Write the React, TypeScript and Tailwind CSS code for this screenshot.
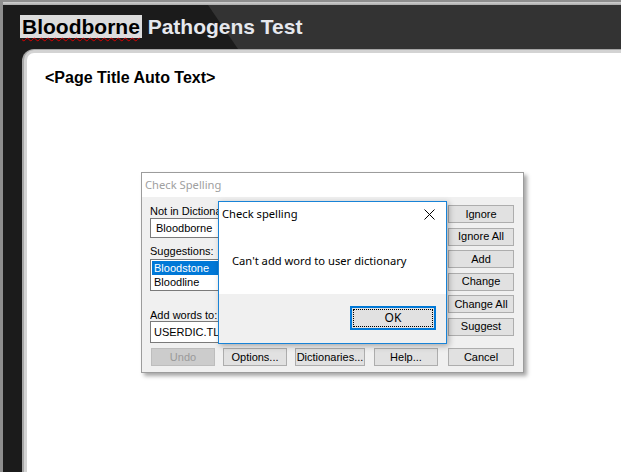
import React from "react";

const sideButtons = ["Ignore", "Ignore All", "Add", "Change", "Change All", "Suggest"];

function WinButton({ label, className = "", disabled = false }: { label: string; className?: string; disabled?: boolean }) {
  return (
    <div
      className={`flex h-[18px] items-center justify-center border text-[11px] leading-none ${
        disabled ? "border-[#bdbdbd] bg-[#cccccc] text-[#9a9a9a]" : "border-[#adadad] bg-[#e1e1e1] text-black"
      } ${className}`}
    >
      {label}
    </div>
  );
}

export default function App() {
  return (
    <div className="relative h-[472px] w-[621px] overflow-hidden font-['Liberation_Sans',Arial,sans-serif]">
      {/* page frame */}
      <div className="h-full border-l-[3px] border-t-[2px] border-[#8e8e8e] bg-[#1b1b1b]">
        <div className="h-[3px] bg-[linear-gradient(#d2d2d2,#a9a9a9)]" />

        {/* header band */}
        <div className="relative h-[44px] bg-[#333333]">
          <div className="absolute inset-0 bg-[#1b1b1b] [clip-path:polygon(0_0,205px_0,235px_100%,0_100%)]" />
          <h1 className="relative pl-[17px] pt-[10px] text-[21px] font-bold leading-[23px]">
            <span className="inline-block bg-[#dcdcdc] px-[2px] text-black underline decoration-[#e00000] decoration-wavy decoration-1 underline-offset-[3px]">
              Bloodborne
            </span>
            <span className="text-[#e6e8ee]"> Pathogens Test</span>
          </h1>
        </div>

        {/* content panel */}
        <div className="ml-[19px] h-[423px] rounded-tl-[12px] bg-[#a6a6a6] pl-[2px] pt-[1px]">
          <div className="h-full rounded-tl-[10px] border-l-[3px] border-t-[3px] border-[#d3d3d3] bg-white pl-[18px] pt-[16px]">
            <p className="text-[16px] font-bold leading-[18px] text-black">&lt;Page Title Auto Text&gt;</p>
          </div>
        </div>
      </div>

      {/* Check Spelling window (inactive, partly covered) */}
      <div className="absolute left-[141px] top-[172px] flex h-[201px] w-[383px] flex-col border border-[#9c9c9c] bg-[#f0f0f0] shadow-[3px_3px_4px_rgba(0,0,0,0.35)]">
        <div className="flex h-[24px] items-center bg-white pl-[3px] font-['Noto_Sans',sans-serif] text-[11.2px] text-[#a0a0a0]">
          Check Spelling
        </div>
        <div className="flex pl-[8px] pr-[9px] pt-[8px]">
          <div className="w-[290px] text-[11px] text-black">
            <div className="h-[13px] w-[68px] overflow-hidden whitespace-nowrap leading-[13px]">Not in Dictionary:</div>
            <div className="flex h-[20px] items-center border border-[#7a7a7a] bg-white pl-[5px]">Bloodborne</div>
            <div className="mt-[7px] h-[13px] w-[68px] overflow-hidden whitespace-nowrap leading-[13px]">Suggestions:</div>
            <div className="mt-[1px] h-[32px] border border-[#7a7a7a] bg-white p-[1px]">
              <div className="h-[14px] bg-[#0078d7] pl-[2px] leading-[14px] text-white">Bloodstone</div>
              <div className="h-[14px] pl-[2px] leading-[14px]">Bloodline</div>
            </div>
            <div className="mt-[18px] h-[12px] w-[68px] overflow-hidden whitespace-nowrap leading-[12px]">Add words to:</div>
            <div className="flex h-[22px] items-center border border-[#7a7a7a] bg-white pl-[3px]">USERDIC.TLX</div>
          </div>
          <div className="ml-[8px] flex w-[66px] flex-col gap-[4.6px]">
            {sideButtons.map((b) => (
              <WinButton key={b} label={b} />
            ))}
          </div>
        </div>
        <div className="mt-[5px] flex pl-[9px]">
          <WinButton label="Undo" disabled className="w-[64px]" />
          <WinButton label="Options..." className="ml-[8px] w-[64px]" />
          <WinButton label="Dictionaries..." className="ml-[8px] w-[70px]" />
          <WinButton label="Help..." className="ml-[9px] w-[64px]" />
          <WinButton label="Cancel" className="ml-[10px] w-[66px]" />
        </div>
      </div>

      {/* message box */}
      <div className="absolute left-[218px] top-[201px] flex h-[143px] w-[229px] flex-col border border-[#1883d7] bg-white font-['Noto_Sans',sans-serif] text-[11.2px] text-black shadow-[2px_2px_6px_rgba(0,0,0,0.3)]">
        <div className="flex h-[25px] items-center justify-between pl-[3px] pr-[11px]">
          <span>Check spelling</span>
          <svg width="11" height="11" viewBox="0 0 11 11" fill="none" stroke="#000" strokeWidth="1">
            <path d="M0.5 0.5 L10.5 10.5 M10.5 0.5 L0.5 10.5" />
          </svg>
        </div>
        <div className="flex-1 pl-[13px] pt-[26px] leading-[15px]">Can't add word to user dictionary</div>
        <div className="flex h-[49px] justify-end bg-[#f0f0f0] pr-[10px] pt-[12px]">
          <div className="flex h-[24px] w-[86px] items-center justify-center border-2 border-[#0078d7] bg-[#e1e1e1] text-[12px] outline-1 outline-offset-[-4px] outline-black outline-dotted">
            OK
          </div>
        </div>
      </div>
    </div>
  );
}
